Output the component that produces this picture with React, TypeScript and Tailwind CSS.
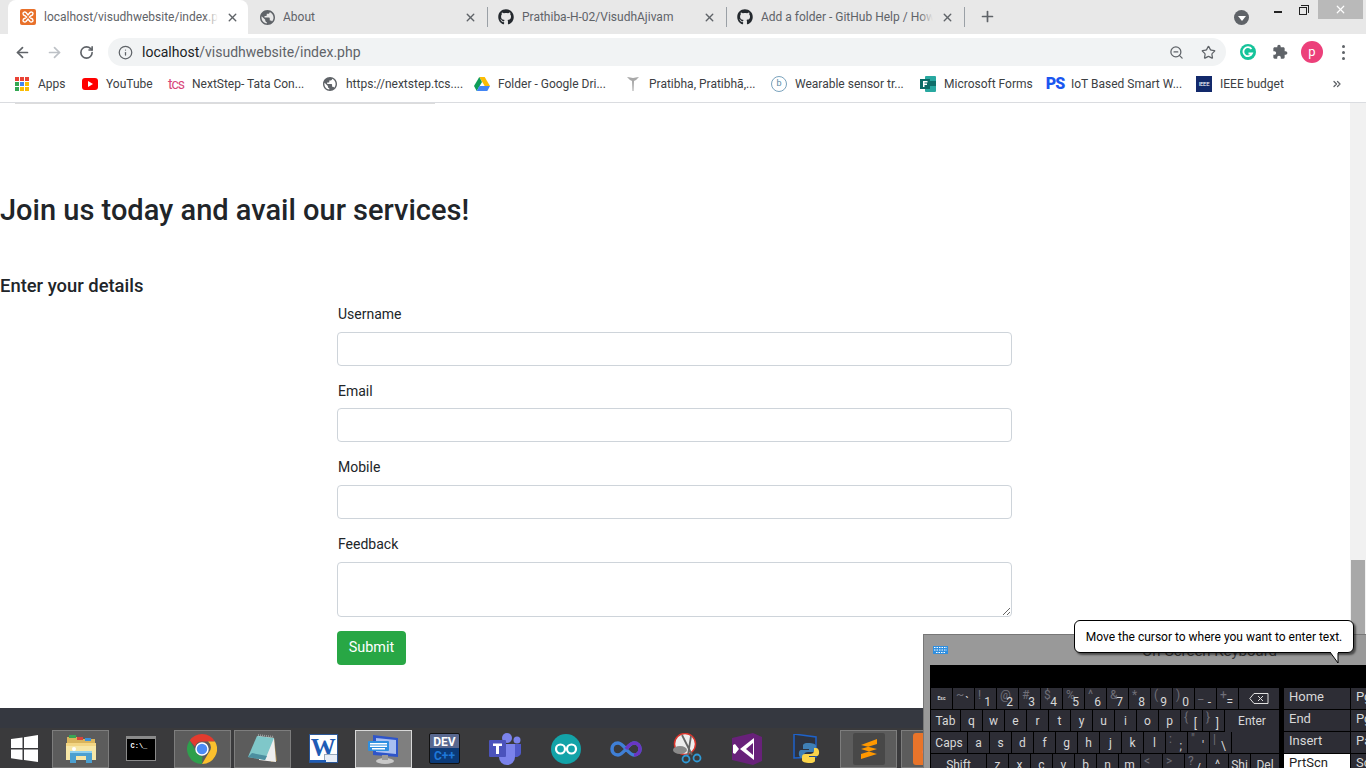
import { ArrowLeft, ArrowRight, RotateCw, Info, ZoomOut, Star, X, Plus, ChevronsRight } from "lucide-react";
import { FaGithub } from "react-icons/fa";

const GLOBE =
  "M12 2C6.48 2 2 6.48 2 12s4.48 10 10 10 10-4.48 10-10S17.52 2 12 2zm-1 17.93c-3.95-.49-7-3.85-7-7.93 0-.62.08-1.21.21-1.79L9 15v1c0 1.1.9 2 2 2v1.93zm6.9-2.54c-.26-.81-1-1.39-1.9-1.39h-1v-3c0-.55-.45-1-1-1H8v-2h2c.55 0 1-.45 1-1V7h2c1.1 0 2-.9 2-2v-.41c2.93 1.19 5 4.06 5 7.41 0 2.08-.8 3.97-2.1 5.39z";
const PUZZLE =
  "M20.5 11H19V7c0-1.1-.9-2-2-2h-4V3.5C13 2.12 11.88 1 10.5 1S8 2.12 8 3.5V5H4c-1.1 0-1.99.9-1.99 2v3.8H3.5c1.49 0 2.7 1.21 2.7 2.7s-1.21 2.7-2.7 2.7H2V20c0 1.1.9 2 2 2h3.8v-1.5c0-1.49 1.21-2.7 2.7-2.7 1.49 0 2.7 1.21 2.7 2.7V22H17c1.1 0 2-.9 2-2v-4h1.5c1.38 0 2.5-1.12 2.5-2.5S21.88 11 20.5 11z";

function Globe({ size = 15 }: { size?: number }) {
  return (
    <svg width={size} height={size} viewBox="2 2 20 20" className="shrink-0">
      <path d={GLOBE} fill="#5f6368" />
    </svg>
  );
}

function XamppIcon() {
  return (
    <svg width="16" height="16" viewBox="0 0 16 16" className="shrink-0">
      <rect width="16" height="16" rx="2" fill="#e8702a" />
      <path d="M3 4.5c0-1.5 2-2 3-1l2 2.5 2-2.5c1-1 3-.5 3 1s-1 2-2 2.2L9.500 8l1.500 1.300c1 .2 2 .7 2 2.200s-2 2-3 1L8 10l-2 2.500c-1 1-3 .5-3-1s1-2 2-2.200L6.500 8 5 6.700c-1-.2-2-.7-2-2.200z" fill="none" stroke="#fff" strokeWidth="1.400" />
    </svg>
  );
}

function Tab({ icon, title, width, fade, active, pad = "pl-[12px]" }: { icon: React.ReactNode; title: string; width: string; fade?: boolean; active?: boolean; pad?: string }) {
  return (
    <div className={`flex items-center h-[34px] shrink-0 relative ${active ? "pr-[9px]" : "pr-[10px]"} ${pad} ${width} ${active ? "bg-white rounded-t-lg" : ""}`}>
      {icon}
      <div className="relative flex-1 overflow-hidden ml-[8px] whitespace-nowrap text-[12px] text-[#5f6368]">
        {title}
        {fade && <div className={`absolute right-0 top-0 bottom-0 w-[14px] bg-linear-to-r from-transparent ${active ? "to-white" : "to-[#e8e8e8]"}`} />}
      </div>
      <X size={13} strokeWidth={2.6} className="text-[#5f6368] ml-[8px] shrink-0" />
    </div>
  );
}

function Bookmark({ icon, label, width }: { icon: React.ReactNode; label: string; width: string }) {
  return (
    <div className={`flex items-center shrink-0 ${width}`}>
      <div className="w-[16px] h-[16px] flex items-center justify-center shrink-0">{icon}</div>
      <span className="ml-[8px] whitespace-nowrap text-[12px] text-[#3c4043]">{label}</span>
    </div>
  );
}

const appColors = ["#ea4335", "#ea4335", "#ea4335", "#34a853", "#4285f4", "#fbbc04", "#34a853", "#fbbc04", "#fbbc04"];

function TabStrip() {
  return (
    <div className="h-[34px] bg-[#e8e8e8] flex items-start pl-[8px] relative shrink-0">
      <Tab active fade width="w-[240px]" icon={<XamppIcon />} title="localhost/visudhwebsite/index.php" />
      <Tab width="w-[239px]" icon={<Globe />} title="About" />
      <div className="w-px h-[20px] bg-[#9aa0a6] mt-[7px]" />
      <Tab pad="pl-[10px]" width="w-[238px]" icon={<FaGithub size={16} className="text-[#24292e] shrink-0" />} title="Prathiba-H-02/VisudhAjivam" />
      <div className="w-px h-[20px] bg-[#9aa0a6] mt-[7px]" />
      <Tab pad="pl-[10px]" fade width="w-[237px]" icon={<FaGithub size={16} className="text-[#24292e] shrink-0" />} title="Add a folder - GitHub Help / How to" />
      <div className="w-px h-[20px] bg-[#9aa0a6] mt-[7px]" />
      <Plus size={17} strokeWidth={2.4} className="text-[#5f6368] ml-[14px] mt-[8px]" />
      <div className="ml-[238px] mt-[10px] w-[15px] h-[15px] rounded-full bg-[#5f6368] flex items-center justify-center">
        <div className="w-0 h-0 border-l-[4px] border-r-[4px] border-t-[5px] border-l-transparent border-r-transparent border-t-white mt-[1px]" />
      </div>
      <div className="ml-auto flex items-start h-[19px]">
        <div className="w-[8px] h-[2px] bg-[#222] mt-[11px] mr-[17px]" />
        <div className="relative w-[10px] h-[10px] mt-[5px] mr-[9px]">
          <div className="absolute top-0 right-0 w-[8px] h-[8px] border-t border-r border-[#222]" />
          <div className="absolute left-0 bottom-0 w-[8px] h-[8px] border border-[#222] bg-[#e8e8e8]" />
        </div>
        <div className="w-[45px] h-[19px] bg-[#b9b9b9] flex items-center justify-center mr-[3px]">
          <X size={13} strokeWidth={2.2} className="text-white" />
        </div>
      </div>
    </div>
  );
}

function Toolbar() {
  return (
    <div className="h-[33px] bg-white flex items-center shrink-0 pl-[14px] pt-[3px]">
      <ArrowLeft size={17} strokeWidth={2.4} className="text-[#5f6368]" />
      <ArrowRight size={17} strokeWidth={2.4} className="text-[#bdc1c6] ml-[15px]" />
      <RotateCw size={15} strokeWidth={2.6} className="text-[#5f6368] ml-[16px]" />
      <div className="ml-[14px] w-[1118px] h-[28px] rounded-full bg-[#f1f3f4] flex items-center pl-[10px]">
        <Info size={15} strokeWidth={2} className="text-[#5f6368]" />
        <span className="ml-[9px] text-[14px] text-[#202124]">
          localhost<span className="text-[#5f6368]">/visudhwebsite/index.php</span>
        </span>
        <ZoomOut size={15} strokeWidth={2} className="text-[#5f6368] ml-auto" />
        <Star size={15} strokeWidth={2} className="text-[#5f6368] ml-[17px] mr-[10px]" />
      </div>
      <svg width="16" height="16" viewBox="0 0 16 16" className="ml-[14px]">
        <circle cx="8" cy="8" r="8" fill="#15c39a" />
        <path d="M11.500 5a4.500 4.500 0 10.500 4.500H8.500" fill="none" stroke="#fff" strokeWidth="1.800" />
      </svg>
      <svg width="16" height="16" viewBox="0 0 24 24" className="ml-[16px]"><path d={PUZZLE} fill="#5f6368" /></svg>
      <div className="ml-[13px] w-[22px] h-[22px] rounded-full bg-[#ec407a] flex items-center justify-center text-white text-[13px]">p</div>
      <div className="ml-[19px] flex flex-col gap-[3px]">
        <div className="w-[3px] h-[3px] rounded-full bg-[#5f6368]" />
        <div className="w-[3px] h-[3px] rounded-full bg-[#5f6368]" />
        <div className="w-[3px] h-[3px] rounded-full bg-[#5f6368]" />
      </div>
    </div>
  );
}

function BookmarksBar() {
  return (
    <div className="h-[36px] bg-white border-b border-[#dadce0] flex items-center pl-[14px] pb-[2px] shrink-0">
      <Bookmark width="w-[68px]" label="Apps" icon={
        <div className="grid grid-cols-3 gap-[1px] w-[14px]">
          {appColors.map((c, i) => <div key={i} className="w-[4px] h-[4px]" style={{ background: c }} />)}
        </div>
      } />
      <Bookmark width="w-[86px]" label="YouTube" icon={
        <svg width="16" height="12" viewBox="0 0 16 12"><rect width="16" height="12" rx="3" fill="#f00" /><path d="M6 3l5 3-5 3z" fill="#fff" /></svg>
      } />
      <Bookmark width="w-[154px]" label="NextStep- Tata Con..." icon={<span className="text-[14px] leading-none tracking-[-1px] text-[#d8457a]">tcs</span>} />
      <Bookmark width="w-[152px]" label="https://nextstep.tcs...." icon={<Globe size={14} />} />
      <Bookmark width="w-[151px]" label="Folder - Google Dri..." icon={
        <svg width="16" height="14" viewBox="0 0 16 14"><path d="M5.300 0h5.400l5.300 9h-5.300z" fill="#fbbc04" /><path d="M5.300 0L0 9l2.700 5 5.300-9z" fill="#0f9d58" /><path d="M2.700 14h10.600l2.700-5H5.400z" fill="#4285f4" /></svg>
      } />
      <Bookmark width="w-[146px]" label="Pratibha, Pratibhā,..." icon={
        <svg width="14" height="16" viewBox="0 0 14 16"><path d="M1 1c3 0 4 1 6 1s3-1 6-1l-3 3-2 1-.5 10h-1L6 5 4 4z" fill="#a8a8a8" /></svg>
      } />
      <Bookmark width="w-[149px]" label="Wearable sensor tr..." icon={
        <div className="w-[16px] h-[16px] rounded-full border border-[#7aa3bd] flex items-center justify-center text-[9px] text-[#5b8aa6]">b</div>
      } />
      <Bookmark width="w-[127px]" label="Microsoft Forms" icon={
        <svg width="16" height="16" viewBox="0 0 16 16"><rect x="5" y="0" width="11" height="16" rx="1" fill="#28a8a0" /><rect x="9" y="5" width="7" height="5" fill="#0f6f6a" /><rect y="3" width="10" height="10" fill="#0b6a65" /><path d="M3 5h4.500v1.400H4.500v1.200H7v1.300H4.500V11H3z" fill="#fff" /></svg>
      } />
      <Bookmark width="w-[149px]" label="IoT Based Smart W..." icon={<span className="text-[16px] leading-none font-black text-[#1a56f0] tracking-[-1px]">PS</span>} />
      <Bookmark width="w-[135px]" label="IEEE budget" icon={
        <div className="w-[16px] h-[16px] bg-[#12296b] flex items-center justify-center text-[6px] leading-none text-white tracking-[-0.3px]">IEEE</div>
      } />
      <ChevronsRight size={12} strokeWidth={2.6} className="text-[#5f6368]" />
    </div>
  );
}

function Field({ label, tall }: { label: string; tall?: boolean }) {
  return (
    <div className="flex flex-col">
      <label className="text-[14px] leading-[21.600px] pt-[1px] text-[#212529] ml-[1px] mb-[6px]">{label}</label>
      {tall ? (
        <textarea className="w-[675px] h-[55px] border border-[#ced4da] rounded-[4px] bg-white mb-[14px] block" />
      ) : (
        <input className="w-[675px] h-[34px] border border-[#ced4da] rounded-[4px] bg-white mb-[14px]" />
      )}
    </div>
  );
}

function Page() {
  return (
    <div className="flex-1 flex bg-white min-h-0">
      <div className="flex-1 flex flex-col min-w-0">
        <div className="w-[420px] h-px bg-[#dcdcdc] ml-[15px]" />
        <h2 className="mt-[86px] text-[29px] leading-[40px] font-medium text-[#212529]">Join us today and avail our services!</h2>
        <h5 className="mt-[44px] text-[18.400px] leading-[24px] font-medium text-[#212529]">Enter your details</h5>
        <form className="ml-[337px] mt-[5.200px] flex flex-col">
          <Field label="Username" />
          <Field label="Email" />
          <Field label="Mobile" />
          <Field label="Feedback" tall />
          <button type="button" className="w-[69px] h-[34px] rounded-[4px] bg-[#28a745] text-white text-[14.400px] pt-[1px]">Submit</button>
        </form>
      </div>
      <div className="w-[16px] bg-[#f1f1f1] flex justify-center pt-[457px]">
        <div className="w-[14px] h-[74px] bg-[#a8a8a8]" />
      </div>
    </div>
  );
}

function TaskSlot({ state, children }: { state?: "open" | "active"; children: React.ReactNode }) {
  const cls =
    state === "active"
      ? "bg-[#7f7f7f] border border-[#d8d8d8]"
      : state === "open"
      ? "bg-[#5c5c5c] border border-[#7d7d7d]"
      : "";
  return <div className={`w-[57px] h-[38px] shrink-0 flex items-center justify-center ${cls}`}>{children}</div>;
}

function Taskbar() {
  return (
    <div className="h-[60px] shrink-0 flex flex-col bg-[#35383f]">
      <div className="h-[20px] bg-[#353840]" />
      <div className="h-[40px] bg-[#3a3a3c] flex items-center gap-[3.600px] pt-[1px]">
        <div className="w-[48.800px] shrink-0 flex justify-center">
          <svg width="27" height="27" viewBox="0 0 27 27"><path d="M0 4l11.500-1.600V13H0zM13 2.200L27 0v13H13zM0 14.500h11.500v10.400L0 23.300zM13 14.500h14V27l-14-2z" fill="#fff" /></svg>
        </div>
        <TaskSlot state="open">
          <svg width="32" height="30" viewBox="0 0 32 30"><path d="M2 3h11l2 2h15v20H2z" fill="#d9b45c" /><rect x="4" y="1" width="7" height="3" fill="#3aa655" /><rect x="12" y="3" width="6" height="3" fill="#d9443a" /><rect x="20" y="4" width="6" height="3" fill="#3b8fd9" /><path d="M1 9h30v17H1z" fill="#f6e6a6" /><path d="M1 9h30v3H1z" fill="#f2d583" /><path d="M5 29V17h22v12h-6v-7H11v7z" fill="#4a9fd0" /><path d="M5 17h22v2H5z" fill="#8fd0ee" /><circle cx="9" cy="15" r="2" fill="#fff" /></svg>
        </TaskSlot>
        <TaskSlot>
          <div className="w-[30px] h-[25px] bg-black border border-[#8a8a8a] border-t-[3px] text-white text-[7px] leading-[14px] font-bold pl-[3px] [font-family:'Liberation_Mono',monospace]">C:\_</div>
        </TaskSlot>
        <TaskSlot state="open">
          <svg width="30" height="30" viewBox="0 0 30 30"><path d="M15 0a15 15 0 0113 7.500H15a7.500 7.500 0 00-7 5L2.700 6.500A15 15 0 0115 0z" fill="#e33b2e" /><path d="M28 7.500A15 15 0 0115 30l6.500-11a7.500 7.500 0 00-.5-11.500z" fill="#fbc02d" /><path d="M2.700 6.500L9 17.500a7.500 7.500 0 006.500 5L15 30A15 15 0 012.700 6.500z" fill="#2e9f4c" /><circle cx="15" cy="15" r="6" fill="#4b8bf5" stroke="#fff" strokeWidth="1.500" /></svg>
        </TaskSlot>
        <TaskSlot state="open">
          <svg width="32" height="30" viewBox="0 0 32 30"><path d="M20 3l7 1 3 23-6 1z" fill="#a8894e" /><path d="M11 2l16 2 2 24-17-2z" fill="#eeeeee" /><path d="M10 2l17 2-9 22-17-3z" fill="#7fc7c9" /><path d="M1 23l17 3 2-4-15-3z" fill="#4c8fa0" /><path d="M11 1l16 2" stroke="#9a9a9a" strokeWidth="2" strokeDasharray="1 1" /></svg>
        </TaskSlot>
        <TaskSlot>
          <div className="relative w-[29px] h-[29px] bg-white border border-[#2b5797] flex items-center justify-center overflow-hidden">
            <span className="text-[25px] leading-none font-bold text-[#1f5cb5] -mt-[3px] [font-family:'Liberation_Serif',serif]">W</span>
            <div className="absolute right-0 bottom-0 w-[13px] h-[8px] bg-[#e8eef7] border-t border-l border-[#99aabb]" />
            <div className="absolute left-0 bottom-0 w-[16px] h-[2px] bg-[#1f5cb5]" />
          </div>
        </TaskSlot>
        <TaskSlot state="active">
          <svg width="32" height="32" viewBox="0 0 32 32"><path d="M5 2l25 3v19L5 22z" fill="#2f55c9" /><path d="M8 5l20 2v14L8 19z" fill="#a9bff0" /><ellipse cx="17" cy="28" rx="9" ry="3" fill="#c9c9c9" /><rect x="14" y="22" width="6" height="5" fill="#9a9a9a" /><rect x="0" y="8" width="21" height="10" rx="1" fill="#2f8fe0" /><path d="M2 10h17v1.500H2zM2 12.500h17V14H2zM4 15h13v1.500H4z" fill="#fff" /></svg>
        </TaskSlot>
        <TaskSlot>
          <div className="w-[31px] h-[31px] rounded-[2px] bg-linear-to-b from-[#59688f] from-50% to-[#0b3a78] to-50% flex flex-col items-center justify-center text-[12px] font-bold leading-[14px] border border-[#111]">
            <span className="text-white">DEV</span>
            <span className="text-[#1e78d8]">C++</span>
          </div>
        </TaskSlot>
        <TaskSlot>
          <svg width="33" height="32" viewBox="0 0 33 32"><circle cx="18" cy="5" r="5" fill="#7b83eb" /><circle cx="28" cy="7" r="3.500" fill="#7b83eb" /><path d="M24 11h8v9a5 5 0 01-8 3z" fill="#5059c9" /><path d="M10 11h16v13a8 8 0 01-16 0z" fill="#7b83eb" /><rect x="0" y="7" width="17" height="17" rx="1" fill="#4b53bc" /><path d="M4 10.500h9v2.500h-3v8H7v-8H4z" fill="#fff" /></svg>
        </TaskSlot>
        <TaskSlot>
          <svg width="30" height="30" viewBox="0 0 30 30"><circle cx="15" cy="15" r="15" fill="#13a3a8" /><circle cx="9.500" cy="15" r="4.500" fill="none" stroke="#fff" strokeWidth="2.200" /><circle cx="20.500" cy="15" r="4.500" fill="none" stroke="#fff" strokeWidth="2.200" /></svg>
        </TaskSlot>
        <TaskSlot>
          <svg width="32" height="18" viewBox="0 0 32 18"><path d="M8 3c-4 0-6 3-6 6s2 6 6 6c6 0 10-12 16-12 4 0 6 3 6 6s-2 6-6 6c-6 0-10-12-16-12z" fill="none" stroke="#3f7fd6" strokeWidth="3.500" /><path d="M16 9c3-4 5-6 8-6 4 0 6 3 6 6s-2 6-6 6" fill="none" stroke="#6a35c2" strokeWidth="3.500" /></svg>
        </TaskSlot>
        <TaskSlot>
          <svg width="30" height="32" viewBox="0 0 30 32"><circle cx="13" cy="11" r="10.500" fill="#eee" stroke="#d9352c" strokeWidth="1.500" /><ellipse cx="8" cy="17" rx="7" ry="4" fill="#8a8a8a" /><path d="M10 2l10 20M19 3l-3 19" stroke="#666" strokeWidth="1.800" /><circle cx="14" cy="26" r="3.500" fill="none" stroke="#2f9ad6" strokeWidth="1.800" /><circle cx="25" cy="25" r="3.500" fill="none" stroke="#2f9ad6" strokeWidth="1.800" /></svg>
        </TaskSlot>
        <TaskSlot>
          <svg width="30" height="32" viewBox="0 0 30 32"><path d="M0 5l21-5 9 4v24l-9 4-21-5z" fill="#68217a" /><path d="M22 5v22L8 16zM3 11l4 5-4 5-2-1v-8z" fill="#fff" /><path d="M21 10l-7 6 7 6z" fill="#68217a" /></svg>
        </TaskSlot>
        <TaskSlot>
          <svg width="30" height="30" viewBox="0 0 30 30"><path d="M1 0l22 3v20L1 24z" fill="#2d3340" stroke="#1e62c9" strokeWidth="1.500" /><path d="M15 9c-5 0-5 2-5 3v3h6v1H8c-3 0-3 8 1 8h2v-3c0-2 2-3 4-3h5c2 0 3-1 3-3v-3c0-2-3-3-8-3z" fill="#3f7fb5" /><path d="M17 29c5 0 5-2 5-3v-3h-6v-1h8c3 0 3-8-1-8h-2v3c0 2-2 3-4 3h-5c-2 0-3 1-3 3v3c0 2 3 3 8 3z" fill="#fbd54a" /></svg>
        </TaskSlot>
        <TaskSlot state="open">
          <div className="w-[32px] h-[32px] rounded-[2px] bg-[#484848] flex items-center justify-center">
            <svg width="18" height="20" viewBox="0 0 18 20"><path d="M17 0v5L1 10V6zM1 10l16 5v-5L1 6zM17 10v5L1 20v-5z" fill="#ff9800" /></svg>
          </div>
        </TaskSlot>
        <TaskSlot state="open">
          <div className="w-[32px] h-[32px] rounded-[3px] bg-[#e8742a] text-white text-[24px] leading-[32px] font-bold text-center">8</div>
        </TaskSlot>
      </div>
    </div>
  );
}

type KeyDef = { main: string; sub?: string; w?: number; big?: boolean };

const row1: KeyDef[] = [
  { main: "Esc", big: true }, { sub: "~", main: "`" }, { sub: "!", main: "1" }, { sub: "@", main: "2" }, { sub: "#", main: "3" }, { sub: "$", main: "4" }, { sub: "%", main: "5" }, { sub: "^", main: "6" }, { sub: "&", main: "7" }, { sub: "*", main: "8" }, { sub: "(", main: "9" }, { sub: ")", main: "0" }, { sub: "_", main: "-" }, { sub: "+", main: "=" },
];
const letters = (s: string): KeyDef[] => s.split("").map((c) => ({ main: c, big: true }));
const row2: KeyDef[] = [{ main: "Tab", w: 29, big: true }, ...letters("qwertyuiop"), { sub: "{", main: "[" }, { sub: "}", main: "]" }];
const row3: KeyDef[] = [{ main: "Caps", w: 36, big: true }, ...letters("asdfghjkl"), { sub: ":", main: ";" }, { sub: '"', main: "'" }, { sub: "|", main: "\\" }];
const row4: KeyDef[] = [{ main: "Shift", w: 55, big: true }, ...letters("zxcvbnm"), { sub: "<", main: "," }, { sub: ">", main: "." }, { sub: "?", main: "/" }, { main: "^", big: true }, { main: "Shi", big: true }];

function Key({ k }: { k: KeyDef }) {
  if (k.sub) {
    return (
      <div className="relative h-[21px] w-[21px] shrink-0 bg-[#2d2d35] text-[#d8d8d8] overflow-hidden">
        <span className="absolute left-[3px] top-0 text-[12px] leading-[14px] text-[#6f6f78]">{k.sub}</span>
        <span className="absolute right-[5px] bottom-[-1px] text-[12px] leading-[15px]">{k.main}</span>
      </div>
    );
  }
  return (
    <div style={{ width: k.w ?? 21 }} className={`h-[21px] shrink-0 bg-[#2d2d35] text-[#d8d8d8] flex items-center justify-center ${k.main === "Esc" ? "text-[5px] font-bold" : "text-[12px]"}`}>
      {k.main}
    </div>
  );
}

function KeyRow({ keys, extra }: { keys: KeyDef[]; extra?: React.ReactNode }) {
  return (
    <div className="flex gap-[1px] h-[21px] shrink-0">
      {keys.map((k, i) => <Key key={i} k={k} />)}
      {extra}
    </div>
  );
}

function NavKey({ label, selected }: { label: string; selected?: boolean }) {
  return (
    <div className={`h-[21px] w-[66px] shrink-0 px-[5px] text-[13px] leading-[18px] ${selected ? "bg-white text-[#222]" : "bg-[#2d2d35] text-[#d8d8d8]"}`}>{label}</div>
  );
}

function OnScreenKeyboard() {
  return (
    <div className="absolute left-[923px] top-[634px] w-[443px] h-[134px] bg-[#999999] border-t border-l border-[#777] overflow-hidden flex flex-col">
      <div className="h-[30px] relative shrink-0">
        <svg width="15" height="8" viewBox="0 0 15 8" className="absolute left-[9px] top-[11px]"><rect width="15" height="8" fill="#2f8fe0" /><path d="M1 1.500h13M1 4h13M3 6.500h9" stroke="#fff" strokeDasharray="1.500 1" /></svg>
        <span className="absolute left-[218px] top-[5px] text-[15px] text-[#3a3a3a] whitespace-nowrap">On-Screen Keyboard</span>
      </div>
      <div className="ml-[6px] flex-1 bg-black pt-[23px] pl-[1px] flex gap-[5px] min-h-0">
        <div className="w-[348px] shrink-0 flex flex-col gap-[1px]">
          <KeyRow keys={row1} extra={
            <div className="w-[40px] h-[21px] bg-[#2d2d35] flex items-center justify-center">
              <svg width="20" height="11" viewBox="0 0 20 11" fill="none" stroke="#e0e0e0"><path d="M5 .5h14v10H5L.8 5.500z" /><path d="M9 3l5 5M14 3l-5 5" /></svg>
            </div>
          } />
          <KeyRow keys={row2} extra={
            <div className="w-[54px] h-[22px] bg-[#2d2d35] text-[#d8d8d8] text-[12px] flex items-center justify-center">Enter</div>
          } />
          <KeyRow keys={row3} extra={<div className="w-[47px] h-[22px] -mt-[1px] bg-[#2d2d35]" />} />
          <KeyRow keys={row4} extra={
            <div className="w-[28px] h-[21px] bg-[#2d2d35] text-[#d8d8d8] text-[12px] flex items-center justify-center">Del</div>
          } />
        </div>
        <div className="w-[66px] shrink-0 flex flex-col gap-[1px]">
          <NavKey label="Home" />
          <NavKey label="End" />
          <NavKey label="Insert" />
          <NavKey label="PrtScn" selected />
        </div>
        <div className="w-[20px] shrink-0 flex flex-col gap-[1px] -ml-[4px]">
          {["Pg", "Pg", "Pa", "Sc"].map((l, i) => (
            <div key={i} className="h-[21px] shrink-0 px-[5px] bg-[#2d2d35] text-[#d8d8d8] text-[13px] leading-[18px] overflow-hidden">{l}</div>
          ))}
        </div>
      </div>
    </div>
  );
}

function CursorTip() {
  return (
    <div className="absolute left-[1074px] top-[620px] w-[280px] h-[44px]">
      <div className="h-[33px] bg-white border border-black rounded-[6px] shadow-[2px_2px_2px_rgba(0,0,0,0.5)] flex items-center justify-center text-[12px] text-black whitespace-nowrap">
        Move the cursor to where you want to enter text.
      </div>
      <svg width="14" height="12" viewBox="0 0 14 12" className="absolute left-[256px] top-[32px]">
        <path d="M0 0l8 11V0z" fill="#fff" />
        <path d="M0 0l8 11V1" fill="none" stroke="#000" />
      </svg>
    </div>
  );
}

export default function App() {
  return (
    <div className="relative w-[1366px] h-[768px] overflow-hidden flex flex-col bg-white [font-family:Roboto,sans-serif]">
      <TabStrip />
      <Toolbar />
      <BookmarksBar />
      <Page />
      <Taskbar />
      <OnScreenKeyboard />
      <CursorTip />
    </div>
  );
}
